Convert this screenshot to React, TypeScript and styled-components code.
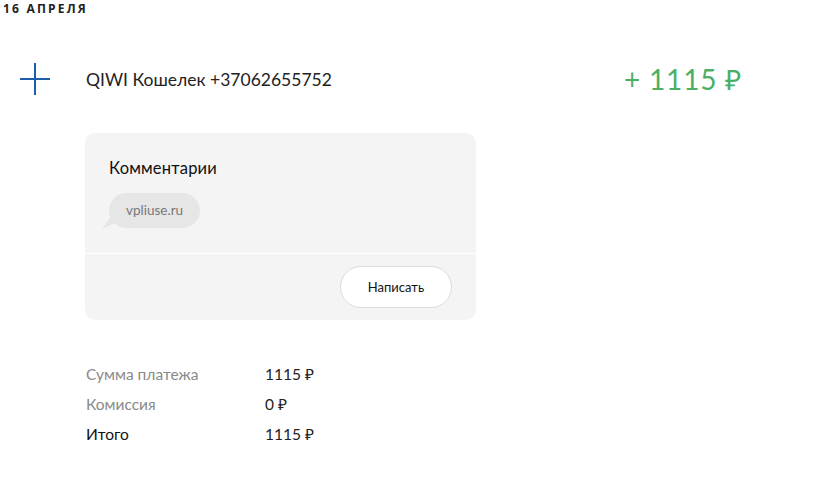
import React from 'react'
import styled, { createGlobalStyle } from 'styled-components'

const GlobalStyle = createGlobalStyle`
  html, body {
    margin: 0;
    padding: 0;
    background: #fff;
  }
  body {
    font-family: Lato, 'Open Sans', Arial, sans-serif;
    color: #1c1c1c;
  }
`

const Page = styled.div`
  width: 822px;
  height: 477px;
  overflow: hidden;
`

const DateLabel = styled.div`
  padding: 2px 0 0 3px;
  height: 14px;
  font-family: 'Open Sans', Arial, sans-serif;
  font-size: 12px;
  font-weight: 700;
  letter-spacing: 2.2px;
  line-height: 14px;
  color: #222;
`

const TxnRow = styled.div`
  display: flex;
  align-items: center;
  width: 742px;
  height: 32px;
  margin-top: 47px;
`

const IconBox = styled.div`
  width: 30px;
  height: 32px;
  margin-left: 20px;
  margin-right: 36px;
  display: flex;
`

const TxnTitle = styled.div`
  flex: 1;
  font-size: 17.5px;
  color: #222;
`

const TxnAmount = styled.div`
  font-size: 28px;
  color: #4bb066;
  letter-spacing: 0.8px;
`

const Details = styled.div`
  padding-left: 85px;
  margin-top: 38px;
`

const Card = styled.div`
  width: 391px;
  background: #f4f4f4;
  border-radius: 10px;
  overflow: hidden;
`

const CardTop = styled.div`
  padding: 25px 24px;
  border-bottom: 1px solid #fff;
`

const CardTitle = styled.div`
  font-size: 16.5px;
  line-height: 20px;
  letter-spacing: 0.2px;
  color: #111;
`

const Bubble = styled.div`
  position: relative;
  display: inline-block;
  margin-top: 15px;
  height: 35px;
  line-height: 35px;
  padding: 0 17px;
  background: #e6e6e6;
  border-radius: 18px;
  font-size: 13.5px;
  color: #777;

  &::before {
    content: '';
    position: absolute;
    left: -7px;
    bottom: -1px;
    width: 20px;
    height: 16px;
    background: #e6e6e6;
    clip-path: polygon(0 100%, 60% 0, 100% 40%);
  }
`

const CardBottom = styled.div`
  display: flex;
  justify-content: flex-end;
  padding: 12px 24px;
`

const WriteButton = styled.button`
  width: 112px;
  height: 42px;
  border: 1px solid #dcdcdc;
  border-radius: 21px;
  background: #fff;
  font-family: Lato, 'Open Sans', Arial, sans-serif;
  font-size: 13px;
  color: #111;
  cursor: pointer;
`

const Summary = styled.div`
  margin-top: 39px;
`

const SumRow = styled.div<{ $strong?: boolean }>`
  display: flex;
  height: 30px;
  line-height: 30px;
  font-size: 15.5px;
  padding-left: 1px;
  color: ${p => (p.$strong ? '#111' : '#8a8a8a')};
`

const SumLabel = styled.div`
  width: 179px;
`

const SumValue = styled.div`
  color: #222;
`

const PlusIcon = () => (
  <svg width="30" height="32" viewBox="0 0 30 32">
    <path d="M15 0V32M0 16H30" stroke="#1d5ea8" strokeWidth="2" fill="none" />
  </svg>
)

const rows = [
  { label: 'Сумма платежа', value: '1115 ₽' },
  { label: 'Комиссия', value: '0 ₽' },
  { label: 'Итого', value: '1115 ₽', strong: true },
]

function App() {
  return (
    <Page>
      <GlobalStyle />
      <DateLabel>16 АПРЕЛЯ</DateLabel>
      <TxnRow>
        <IconBox>
          <PlusIcon />
        </IconBox>
        <TxnTitle>QIWI Кошелек +37062655752</TxnTitle>
        <TxnAmount>+ 1115 ₽</TxnAmount>
      </TxnRow>
      <Details>
        <Card>
          <CardTop>
            <CardTitle>Комментарии</CardTitle>
            <Bubble>vpliuse.ru</Bubble>
          </CardTop>
          <CardBottom>
            <WriteButton>Написать</WriteButton>
          </CardBottom>
        </Card>
        <Summary>
          {rows.map(r => (
            <SumRow key={r.label} $strong={r.strong}>
              <SumLabel>{r.label}</SumLabel>
              <SumValue>{r.value}</SumValue>
            </SumRow>
          ))}
        </Summary>
      </Details>
    </Page>
  )
}

export default App
